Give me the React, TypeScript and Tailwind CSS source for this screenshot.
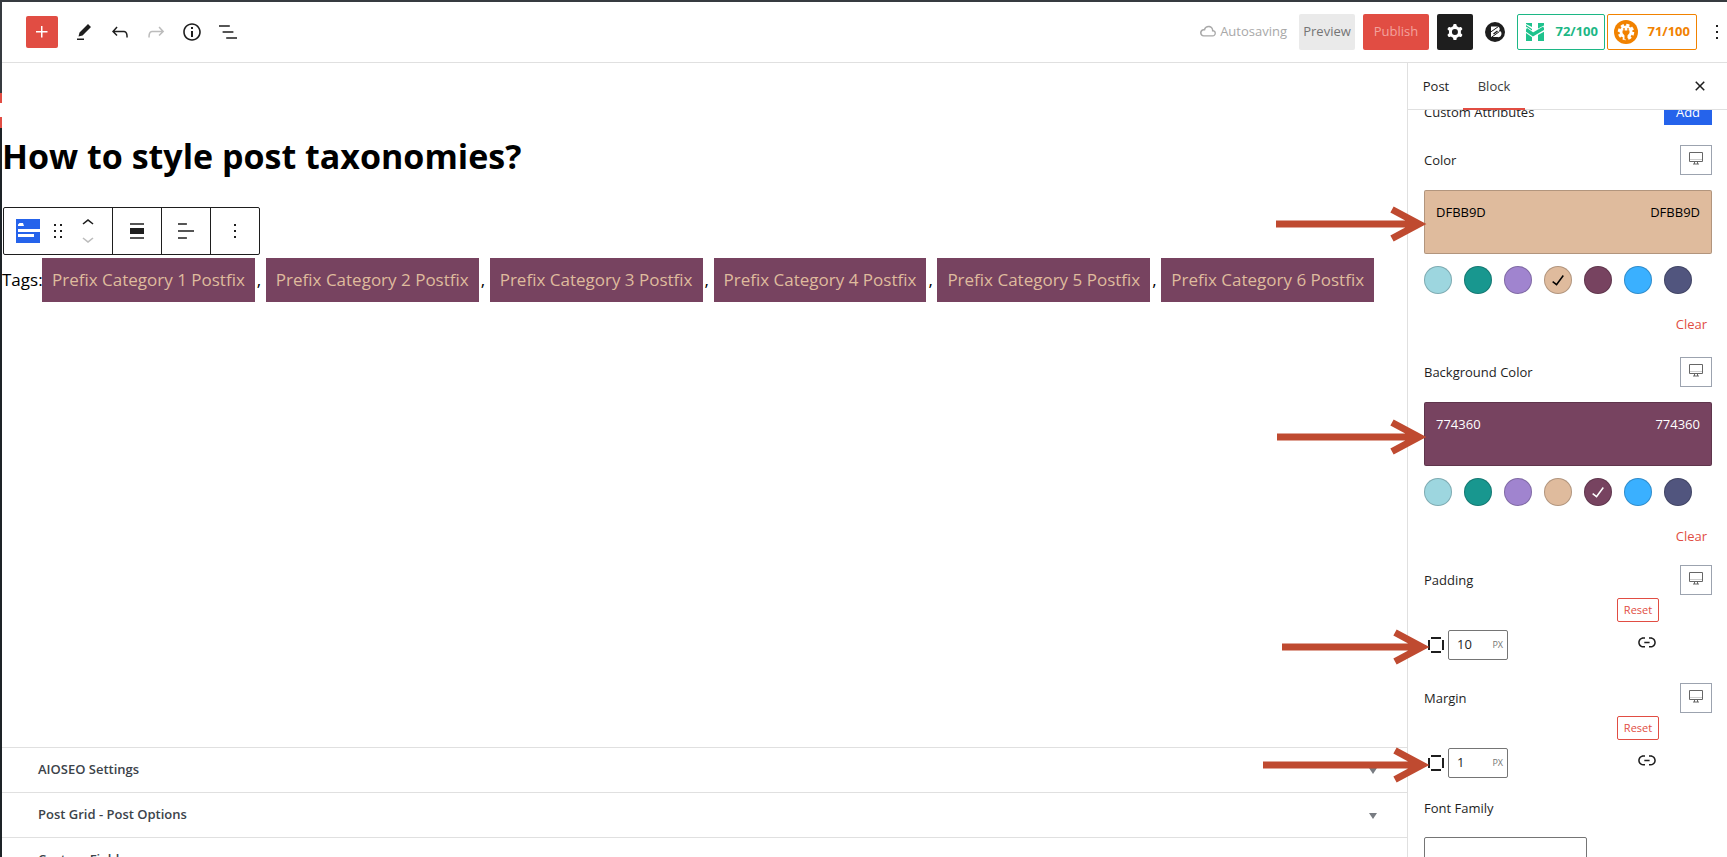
import { useState } from "react";
import type { ReactNode } from "react";

function Icon({ d, className = "size-6" }: { d: string; className?: string }) {
  return (
    <svg viewBox="0 0 24 24" className={`shrink-0 ${className}`} fill="currentColor" aria-hidden="true">
      <path fillRule="evenodd" d={d} />
    </svg>
  );
}

const icons = {
  plus: "M11 12.5V17.5H12.5V12.5H17.5V11H12.5V6H11V11H6V12.5H11Z",
  edit: "m19 7-3-3-8.5 8.5-1 4 4-1L19 7Zm-7 11.5H5V20h7v-1.5Z",
  undo: "M18.3 11.7c-.6-.6-1.4-.9-2.3-.9H6.7l2.9-3.3-1.1-1-4.5 5L8.5 16l1-1-2.7-2.7H16c.5 0 .9.2 1.3.5 1 1 1 3.4 1 4.5v.3h1.5v-.2c0-1.5 0-4.3-1.5-5.7z",
  redo: "M15.6 6.5l-1.1 1 2.9 3.3H8c-.9 0-1.7.3-2.3.9-1.4 1.5-1.4 4.2-1.4 5.6v.2h1.5v-.3c0-1.1 0-3.5 1-4.5.3-.3.7-.5 1.3-.5h9.2L14.5 15l1.1 1.1 4.6-4.6-4.6-5z",
  info: "M12 3.2c-4.8 0-8.8 3.9-8.8 8.8 0 4.8 3.9 8.8 8.8 8.8 4.8 0 8.8-3.9 8.8-8.8 0-4.8-4-8.8-8.8-8.8zm0 16c-4 0-7.2-3.3-7.2-7.2C4.8 8 8 4.8 12 4.8s7.2 3.3 7.2 7.2c0 4-3.2 7.2-7.2 7.2zM11 17h2v-6h-2v6zm0-8h2V7h-2v2z",
  list: "M13.8 5.2H3v1.5h10.8V5.2zm-3.6 12v1.5H21v-1.5H10.2zm7.2-6H6.6v1.5h10.8v-1.5z",
  cloud: "M17.3 10.1c0-2.5-2.1-4.4-4.8-4.4-2.2 0-4.1 1.4-4.6 3.3h-.2C5.7 9 4 10.7 4 12.8c0 2.1 1.7 3.8 3.7 3.8h9c1.8 0 3.2-1.5 3.2-3.3.1-1.6-1.1-2.9-2.6-3.2zm-.5 5.1h-9c-1.2 0-2.2-1.1-2.2-2.3s1-2.4 2.2-2.4h1.3l.3-1.1c.4-1.3 1.7-2.2 3.2-2.2 1.8 0 3.3 1.3 3.3 2.9v1.3l1.3.2c.8.1 1.4.9 1.4 1.8-.1 1-.9 1.8-1.8 1.8z",
  cog: "M10.289 4.836A1 1 0 0111.275 4h1.306a1 1 0 01.987.836l.244 1.466c.787.26 1.503.679 2.108 1.218l1.393-.522a1 1 0 011.216.437l.653 1.13a1 1 0 01-.23 1.273l-1.148.944a6.025 6.025 0 010 2.435l1.149.946a1 1 0 01.23 1.272l-.653 1.13a1 1 0 01-1.216.437l-1.394-.522c-.605.54-1.32.958-2.108 1.218l-.244 1.466a1 1 0 01-.987.836h-1.306a1 1 0 01-.986-.836l-.244-1.466a5.995 5.995 0 01-2.108-1.218l-1.394.522a1 1 0 01-1.217-.436l-.653-1.131a1 1 0 01.23-1.272l1.149-.946a6.026 6.026 0 010-2.435l-1.148-.944a1 1 0 01-.23-1.272l.653-1.131a1 1 0 011.217-.437l1.393.522a5.994 5.994 0 012.108-1.218l.244-1.466zM14.929 12a3 3 0 11-6 0 3 3 0 016 0z",
  more: "M13 19h-2v-2h2v2zm0-6h-2v-2h2v2zm0-6h-2V5h2v2z",
  drag: "M8 7h2V5H8v2zm0 6h2v-2H8v2zm0 6h2v-2H8v2zm6-14v2h2V5h-2zm0 8h2v-2h-2v2zm0 6h2v-2h-2v2z",
  up: "M6.5 12.4L12 8l5.5 4.4-.9 1.2L12 10l-4.5 3.6-1-1.2z",
  down: "M17.5 11.6L12 16l-5.5-4.4.9-1.2L12 14l4.5-3.6 1 1.2z",
  alignNone: "M5 15h14V9H5v6zm0 4.8h14v-1.5H5v1.5zM5 4.2v1.5h14V4.2H5z",
  alignLeft: "M4 19.8h8.9v-1.5H4v1.5zm8.9-15.6H4v1.5h8.9V4.2zm-8.9 7v1.5h16v-1.5H4z",
  link: "M15.6 7.2H14v1.5h1.6c2 0 3.7 1.7 3.7 3.7s-1.7 3.7-3.7 3.7H14v1.5h1.6c2.8 0 5.2-2.3 5.2-5.2 0-2.9-2.3-5.2-5.2-5.2zM4.7 12.4c0-2 1.7-3.7 3.7-3.7H10V7.2H8.4c-2.9 0-5.2 2.3-5.2 5.2 0 2.9 2.3 5.2 5.2 5.2H10v-1.5H8.4c-2 0-3.7-1.7-3.7-3.7zm4.6.9h5.3v-1.5H9.3v1.5z",
  check: "M16.7 7.1l-6.3 8.5-3.3-2.5-.9 1.2 4.5 3.4L17.9 8z",
  close: "M12 13.06l3.712 3.713 1.061-1.06L13.061 12l3.712-3.712-1.06-1.06L12 10.938 8.288 7.227l-1.061 1.06L10.939 12l-3.712 3.712 1.06 1.061L12 13.061z",
  box: "M7 4h10v2H7zM7 18h10v2H7zM4 7h2v10H4zM18 7h2v10h-2z",
};

function Header() {
  const tools = [
    { label: "Tools", d: icons.edit, color: "text-[#1e1e1e]" },
    { label: "Undo", d: icons.undo, color: "text-[#1e1e1e]" },
    { label: "Redo", d: icons.redo, color: "text-[#bcbcbc]" },
    { label: "Details", d: icons.info, color: "text-[#1e1e1e]" },
    { label: "List View", d: icons.list, color: "text-[#1e1e1e]" },
  ];
  return (
    <header className="flex h-[61px] shrink-0 items-center border-b border-[#e0e0e0] pl-6">
      <button aria-label="Add block" className="mr-2 flex size-8 items-center justify-center rounded-xs bg-[#e14d43] text-white">
        <Icon d={icons.plus} />
      </button>
      {tools.map((t) => (
        <button key={t.label} aria-label={t.label} className={`flex size-9 items-center justify-center ${t.color}`}>
          <Icon d={t.d} />
        </button>
      ))}
      <div className="ml-auto flex items-center">
        <span className="mr-3 flex items-center text-[#a8a8a8]">
          <Icon d={icons.cloud} />
          Autosaving
        </span>
        <button className="mr-2 h-9 w-14 rounded-xs bg-[#eaeaea] text-[#757575]">Preview</button>
        <button className="mr-2 h-9 w-[66px] rounded-xs bg-[#e14d43] text-[#f3a39d]">Publish</button>
        <button aria-label="Settings" className="mr-3 flex size-9 items-center justify-center rounded-xs bg-[#1e1e1e] text-white">
          <Icon d={icons.cog} />
        </button>
        <button aria-label="Blocks" className="mr-3">
          <svg viewBox="0 0 20 20" className="size-5" aria-hidden="true">
            <circle cx="10" cy="10" r="10" fill="#1e1e1e" />
            <path d="M6 4.500h6a2.500 2.500 0 0 1 2 4.300 3 3 0 0 1-1.500 6.200H6z" fill="#fff" />
            <path d="M5 10.500l8.500-6M5.500 16l9-6.500" stroke="#1e1e1e" strokeWidth="1" />
            <path d="M8.500 12l4-3" stroke="#1e1e1e" strokeWidth="1.500" />
          </svg>
        </button>
        <button className="mr-0.5 flex h-9 w-[88px] items-center justify-between rounded-xs border border-[#1cb785] pr-1.5 pl-2 font-bold text-[#1cb785]">
          <svg viewBox="0 0 18 18" className="size-[18px]" aria-hidden="true">
            <path d="M0 0h6v4L0 1zM12 0h6v3l-6 3zM0 2l6 4v12H0zM12 6l6-3v15h-6z" fill="#1fc28d" />
            <path d="M-1 6l8 5.500L19 5" fill="none" stroke="#fff" strokeWidth="5.500" />
            <path d="M0 6.500l7 5L18 5" fill="none" stroke="#1fc28d" strokeWidth="3.500" />
          </svg>
          72/100
        </button>
        <button className="flex h-9 w-[90px] items-center justify-between rounded-xs border border-[#f18200] pr-1.5 pl-1.5 font-bold text-[#f18200]">
          <svg viewBox="0 0 24 24" className="size-6" aria-hidden="true">
            <circle cx="12" cy="12" r="12" fill="#f18200" />
            <circle cx="12" cy="12" r="6.500" fill="#fff" />
            <circle cx="12" cy="12" r="7" fill="none" stroke="#fff" strokeWidth="2.500" strokeDasharray="3.200 2.298" />
            <path d="M10 8v3M14 8v3" stroke="#f18200" strokeWidth="1.300" />
            <path d="M8.500 10.500h7V13l-2 2.500v4h-3v-4l-2-2.500z" fill="#f18200" />
          </svg>
          71/100
        </button>
        <button aria-label="Options" className="-mr-0.5 ml-2 flex w-6 justify-center text-[#1e1e1e]">
          <Icon d={icons.more} />
        </button>
      </div>
    </header>
  );
}

function BlockToolbar() {
  return (
    <div className="flex h-12 w-fit divide-x divide-[#1e1e1e] rounded-xs border border-[#1e1e1e] text-[#1e1e1e]">
      <div className="flex w-[109px] items-center pl-3">
        <button aria-label="Post taxonomies">
          <svg viewBox="0 0 24 24" className="size-6" aria-hidden="true">
            <path d="M0 0h24v24H0z" fill="#2563eb" />
            <path d="M2 10h22v3H2zM2 15h16v3H2zM2 7V5.500L3.500 4H7l1 3z" fill="#fff" />
          </svg>
        </button>
        <button aria-label="Drag" className="ml-1.5">
          <Icon d={icons.drag} />
        </button>
        <div className="ml-1.5 flex flex-col">
          <button aria-label="Move up" className="h-4 overflow-hidden">
            <Icon d={icons.up} className="-mt-1 size-6" />
          </button>
          <button aria-label="Move down" className="h-4 overflow-hidden text-[#bcbcbc]">
            <Icon d={icons.down} className="-mt-1 size-6" />
          </button>
        </div>
      </div>
      {[
        { label: "Align", d: icons.alignNone },
        { label: "Align text", d: icons.alignLeft },
        { label: "Options", d: icons.more },
      ].map((b) => (
        <button key={b.label} aria-label={b.label} className="flex w-[49px] items-center justify-center last:w-12">
          <Icon d={b.d} />
        </button>
      ))}
    </div>
  );
}

function Editor() {
  return (
    <main className="min-w-0 flex-1 overflow-hidden pt-[65px] text-black">
      <h1 className="text-[34px] leading-[56px] font-bold whitespace-nowrap">How to style post taxonomies?</h1>
      <div className="mt-[23px] pl-px">
        <BlockToolbar />
      </div>
      <p className="mt-[3px] flex items-center text-[17px] leading-6 whitespace-nowrap">
        <span className="w-10">Tags:</span>
        {[1, 2, 3, 4, 5, 6].map((n) => (
          <span key={n} className="flex items-center">
            <a href="#category" className="bg-[#774360] p-2.5 text-[#dfbb9d]">
              Prefix Category {n} Postfix
            </a>
            {n < 6 && <span className="w-[11px] pl-0.5">,</span>}
          </span>
        ))}
      </p>
    </main>
  );
}

function MetaBoxes() {
  return (
    <section className="h-[110px] shrink-0 overflow-hidden font-semibold text-[#3c434a]">
      {["AIOSEO Settings", "Post Grid - Post Options", "Custom Fields"].map((title) => (
        <button key={title} className="flex h-[45px] w-full items-center justify-between border-t border-[#e0e0e0] pr-[30px] pl-9 text-left">
          {title}
          <svg viewBox="0 0 8 6" className="mt-0.5 h-1.5 w-2" fill="#787c82" aria-hidden="true">
            <path d="M0 0h8L4 6z" />
          </svg>
        </button>
      ))}
    </section>
  );
}

function Arrow({ length, className }: { length: number; className: string }) {
  return (
    <svg
      className={`pointer-events-none absolute z-20 ${className}`}
      width={length}
      height="36"
      viewBox={`0 0 ${length} 36`}
      aria-hidden="true"
    >
      <path d={`M0 18H${length - 12}M${length - 35} 3.500L${length - 8} 18L${length - 35} 32.500`} fill="none" stroke="#bf4a30" strokeWidth="7" />
    </svg>
  );
}

function DeviceButton() {
  return (
    <button aria-label="Desktop" className="flex h-[30px] w-8 items-start justify-center border border-[#9ca3af] pt-[5px]">
      <svg viewBox="0 0 14 14" className="size-3.5" fill="none" stroke="#666" aria-hidden="true">
        <path d="M.5 1.500h13v9H.5z" />
        <path d="M1 8.500h12" stroke="#ccc" />
        <path d="M5.500 11v2M8.500 11v2M4 13h6" />
      </svg>
    </button>
  );
}

function Row({ label, children }: { label: string; children?: ReactNode }) {
  return (
    <div className="flex h-[30px] items-center justify-between">
      <span className="pt-0.5">{label}</span>
      {children}
    </div>
  );
}

const palette = [
  { hex: "9DD6DF", bg: "bg-[#9dd6df]" },
  { hex: "18978F", bg: "bg-[#18978f]" },
  { hex: "A084CF", bg: "bg-[#a084cf]" },
  { hex: "DFBB9D", bg: "bg-[#dfbb9d]" },
  { hex: "774360", bg: "bg-[#774360]" },
  { hex: "3AB0FF", bg: "bg-[#3ab0ff]" },
  { hex: "51557E", bg: "bg-[#51557e]" },
];

function ColorControl({ label, initial, arrow }: { label: string; initial: string; arrow: ReactNode }) {
  const [value, setValue] = useState(initial);
  const dark = value !== "DFBB9D";
  const current = palette.find((p) => p.hex === value) ?? palette[0];
  return (
    <div className="h-[212px]">
      <Row label={label}>
        <DeviceButton />
      </Row>
      <div className="relative mt-[15px]">
        {arrow}
        <button
          className={`flex h-16 w-full justify-between rounded-xs border border-black/20 px-[11px] pt-[11px] leading-5 ${current.bg} ${dark ? "text-white" : "text-black"}`}
        >
          <span>{value}</span>
          <span>{value}</span>
        </button>
      </div>
      <div className="mt-3 flex gap-3">
        {palette.map((p) => (
          <button
            key={p.hex}
            aria-label={p.hex}
            onClick={() => setValue(p.hex)}
            className={`flex size-7 items-center justify-center rounded-full border border-black/20 ${p.bg}`}
          >
            {p.hex === value && <Icon d={icons.check} className={dark ? "size-6 text-white" : "size-6 text-black"} />}
          </button>
        ))}
      </div>
      <div className="mt-5 flex justify-end pr-[5px]">
        <button className="leading-5 text-[#e14d43]">Clear</button>
      </div>
    </div>
  );
}

function SpacingControl({ label, initial, arrow }: { label: string; initial: string; arrow: ReactNode }) {
  const [value, setValue] = useState(initial);
  return (
    <div className="h-[118px]">
      <Row label={label}>
        <DeviceButton />
      </Row>
      <div className="mt-[3px] flex justify-end pr-[53px]">
        <button className="h-6 w-[42px] rounded-xs border border-[#e14d43] text-[11px] text-[#e14d43]">Reset</button>
      </div>
      <div className="relative mt-2 flex items-center">
        {arrow}
        <Icon d={icons.box} className="size-6 text-[#1e1e1e]" />
        <label className="flex h-[30px] w-[60px] items-center rounded-xs border border-[#757575] pr-1 pl-2">
          <input
            aria-label={label}
            value={value}
            onChange={(e) => setValue(e.target.value)}
            className="w-full min-w-0 bg-transparent outline-none"
          />
          <span className="text-[9px] text-[#757575]">PX</span>
        </label>
        <button aria-label={`Link ${label.toLowerCase()} sides`} className="mr-[53px] mb-1.5 ml-auto text-[#1e1e1e]">
          <Icon d={icons.link} />
        </button>
      </div>
    </div>
  );
}

function Sidebar() {
  return (
    <aside className="relative w-80 shrink-0 border-l border-[#e0e0e0] bg-white text-[#1e1e1e]">
      <div className="relative z-10 flex h-[47px] items-center border-b border-[#e0e0e0] bg-white pr-[15px]">
        <button className="h-full w-[55px] pt-0.5 pl-px">Post</button>
        <button className="relative h-[47px] w-[62px] pt-0.5 text-[#3c3c3c] after:absolute after:inset-x-0 after:bottom-0 after:h-0.5 after:bg-[#e14d43]">
          Block
        </button>
        <button aria-label="Close settings" className="ml-auto">
          <Icon d={icons.close} />
        </button>
      </div>
      <div className="-mt-3 pr-[15px] pl-4">
        <div className="mb-5 flex h-[27px] items-center justify-between">
          <span className="pt-0.5">Custom Attributes</span>
          <button className="h-full w-12 bg-[#2563eb] pt-0.5 text-white">Add</button>
        </div>
        <ColorControl label="Color" initial="DFBB9D" arrow={<Arrow length={151} className="top-4 -left-[148px]" />} />
        <ColorControl label="Background Color" initial="774360" arrow={<Arrow length={150} className="top-[17px] -left-[147px]" />} />
        <div className="-mt-1">
          <SpacingControl label="Padding" initial="10" arrow={<Arrow length={148} className="-top-px -left-[142px]" />} />
          <SpacingControl label="Margin" initial="1" arrow={<Arrow length={167} className="-top-px -left-[161px]" />} />
        </div>
        <label htmlFor="font-family" className="-mt-2 flex h-[30px] items-center pt-0.5">
          Font Family
        </label>
        <select id="font-family" className="mt-3.5 block h-[30px] w-[163px] appearance-none rounded-xs border border-[#757575] bg-white px-2">
          <option value=""></option>
        </select>
      </div>
    </aside>
  );
}

export default function App() {
  return (
    <div className="flex h-screen overflow-hidden bg-white font-['Open_Sans','Noto_Sans',sans-serif] text-[13px]">
      <div className="flex w-0.5 shrink-0 flex-col bg-[#1d2327]">
        <div className="h-[93px] bg-[#363b40]" />
        <div className="h-2.5 bg-[#e14d43]" />
        <div className="h-3.5 bg-white" />
        <div className="h-[11px] bg-[#e14d43]" />
      </div>
      <div className="flex min-w-0 flex-1 flex-col border-t-2 border-[#363b40]">
        <Header />
        <div className="flex min-h-0 flex-1">
          <div className="flex min-w-0 flex-1 flex-col">
            <Editor />
            <MetaBoxes />
          </div>
          <Sidebar />
        </div>
      </div>
    </div>
  );
}
